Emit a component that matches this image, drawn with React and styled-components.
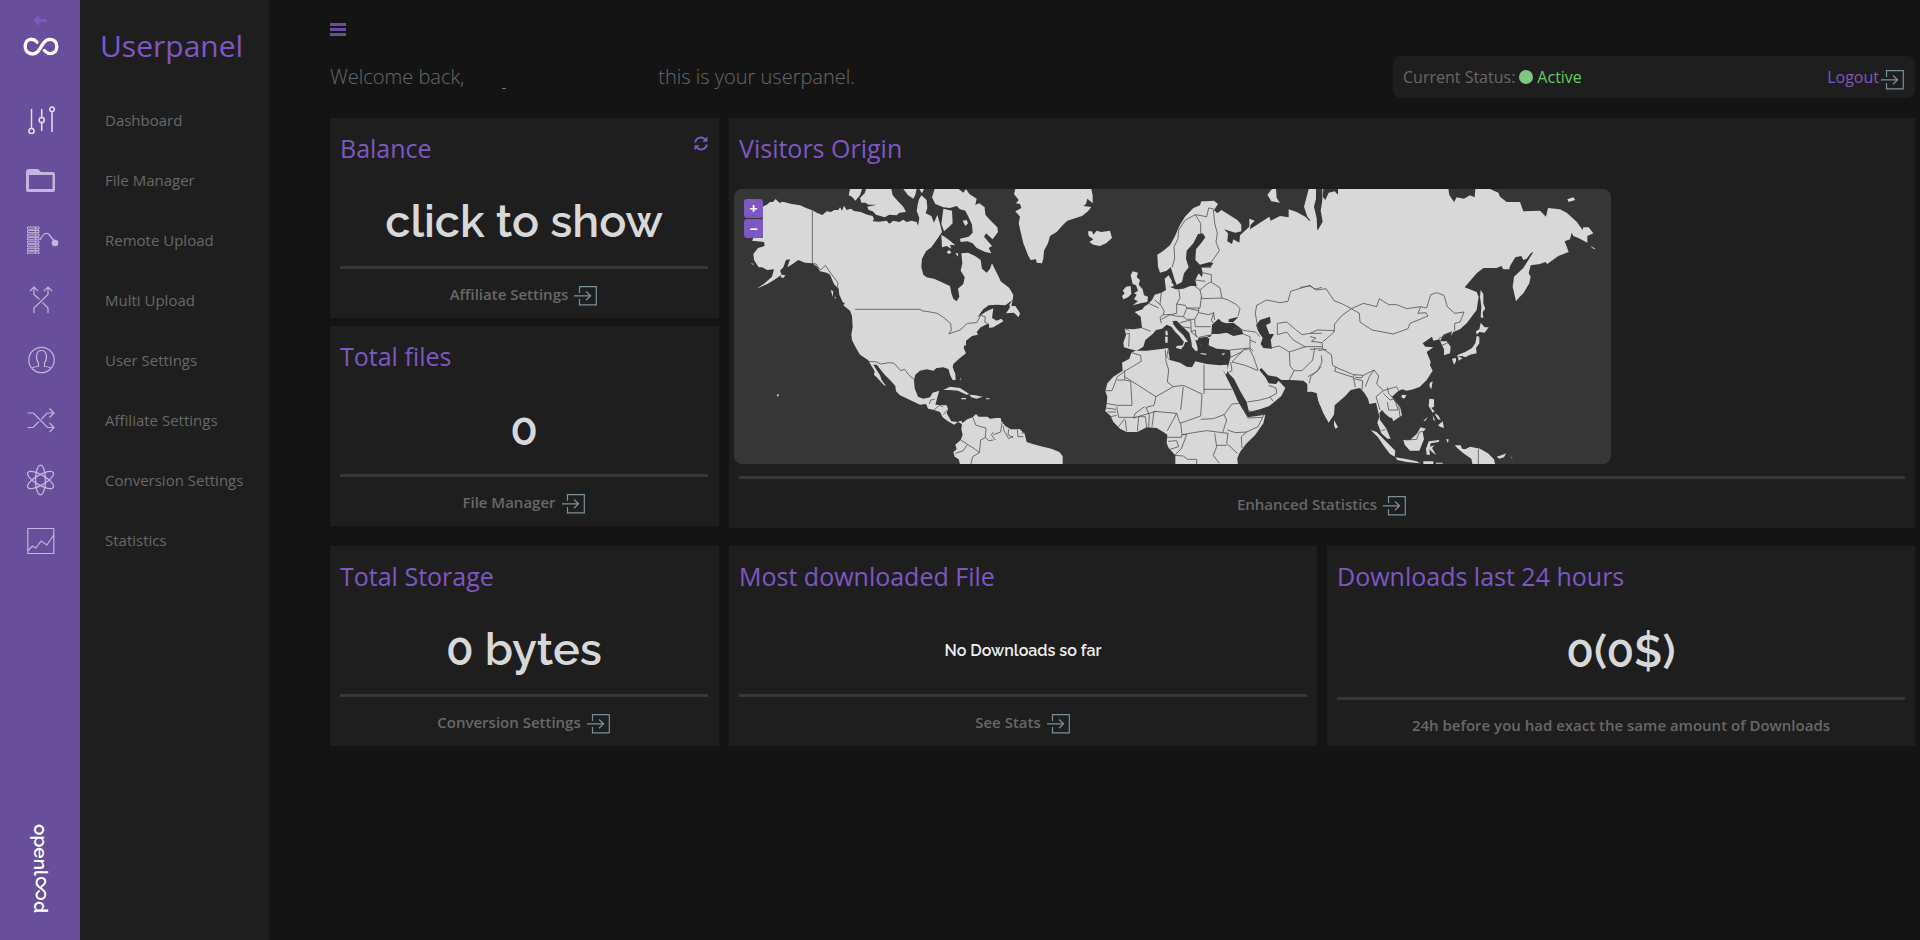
import React from "react";
import styled, { createGlobalStyle } from "styled-components";

const GlobalStyle = createGlobalStyle`
  * { box-sizing: border-box; }
  body { margin: 0; background: #141414; overflow: hidden; font-family: "Open Sans", sans-serif; }
`;

const Page = styled.div`
  display: flex;
  width: 1920px;
  height: 940px;
  background: #141414;
`;
const Rail = styled.nav`
  width: 80px;
  flex: none;
  display: flex;
  flex-direction: column;
  align-items: center;
  background: #684e9b;
`;
const RailTop = styled.div`
  height: 90px;
  width: 100%;
  display: flex;
  flex-direction: column;
  align-items: center;
  padding-top: 15px;
  svg { display: block; }
`;
const InfinityMark = styled.svg`
  margin: 11px 0 0 1px;
`;
const RailItem = styled.a`
  height: 60px;
  width: 80px;
  padding-left: ${(p) => p.$shift || 1}px;
  display: flex;
  align-items: center;
  justify-content: center;
  color: ${(p) => (p.$active ? "#e6e0f0" : "#c3b6dc")};
  svg { display: block; }
`;
const Brand = styled.div`
  margin: auto 0 30px 2px;
  height: 86px;
  width: 30px;
  display: flex;
  align-items: center;
  color: #fff;
  font: 600 19px/30px Raleway, sans-serif;
  writing-mode: vertical-rl;
  svg { display: block; flex: none; }
`;
const Side = styled.aside`
  width: 189px;
  flex: none;
  background: #1e1e1e;
`;
const SideTitle = styled.h1`
  margin: 0;
  height: 90px;
  padding: 25px 0 0 20px;
  font-size: 30px;
  line-height: 41px;
  font-weight: 400;
  color: #7e57c2;
`;
const SideLink = styled.a`
  display: block;
  height: 60px;
  padding-left: 25px;
  font-size: 15px;
  line-height: 60px;
  color: #686868;
  white-space: nowrap;
`;
const Main = styled.main`
  width: 1651px;
  padding: 0 5px 0 61px;
`;
const MenuBar = styled.div`
  height: 56px;
  padding-top: 23px;
`;
const Burger = styled.div`
  width: 16px;
  height: 13px;
  border-top: 3px solid #684e9b;
  border-bottom: 3px solid #684e9b;
  padding: 2px 0;
  &::before { content: ""; display: block; height: 3px; background: #684e9b; }
`;
const Header = styled.header`
  display: flex;
  height: 42px;
  margin-bottom: 20px;
  justify-content: space-between;
`;
const Welcome = styled.div`
  display: flex;
  align-items: center;
  width: 525px;
  padding-bottom: 2px;
  font-size: 20px;
  font-weight: 300;
  color: #686868;
  white-space: nowrap;
`;
const NameTail = styled.i`
  width: 4px;
  height: 1px;
  margin: 25px 0 0 38px;
  background: #777;
`;
const WelcomeEnd = styled.span`
  margin-left: auto;
`;
const Status = styled.div`
  width: 522px;
  border-radius: 8px;
  background: #1e1e1e;
  display: flex;
  align-items: center;
  padding: 0 11px 0 10px;
  font-size: 16px;
  color: #686868;
`;
const Dot = styled.i`
  width: 14px;
  height: 14px;
  margin: 0 4px 0 4px;
  border-radius: 50%;
  background: #7fc77f;
`;
const Active = styled.span`
  color: #66cc66;
`;
const Logout = styled.a`
  display: flex;
  align-items: center;
  margin-left: auto;
  color: #7e57c2;
  svg { display: block; margin: 5px 0 0 2px; }
`;
const Grid = styled.div`
  display: grid;
  grid-template-columns: 389px 588px 588px;
  column-gap: 10px;
  row-gap: 18px;
  align-items: start;
`;
const Stack = styled.div`
  display: flex;
  flex-direction: column;
  gap: 8px;
`;
const Card = styled.section`
  height: ${(p) => p.$height || 200}px;
  grid-column: span ${(p) => p.$span || 1};
  display: flex;
  flex-direction: column;
  background: #1e1e1e;
  padding: 0 ${(p) => p.$right || 10}px 0 10px;
`;
const CardHead = styled.div`
  height: ${(p) => p.$height || 62}px;
  display: flex;
  justify-content: space-between;
  flex: none;
  svg { display: block; margin-top: 18px; }
`;
const Title = styled.h2`
  margin: 0;
  padding-top: 12px;
  font-size: 25px;
  line-height: 36px;
  font-weight: 400;
  color: #7e57c2;
`;
const Value = styled.div`
  flex: 1;
  display: flex;
  align-items: center;
  justify-content: center;
  font-family: Raleway, Lato, sans-serif;
  font-weight: 600;
  font-size: ${(p) => (p.$small ? 16 : 45)}px;
  padding-bottom: ${(p) => (p.$small ? 2 : 3)}px;
  color: ${(p) => (p.$small ? "#eeeeee" : "#d8d8d8")};
  white-space: pre;
`;
const Rule = styled.div`
  height: 3px;
  flex: none;
  background: #363636;
`;
const CardFoot = styled.div`
  height: ${(p) => p.$height || 49}px;
  flex: none;
  padding-top: ${(p) => p.$drop || 0}px;
  display: flex;
  align-items: center;
  justify-content: center;
  font-size: 15px;
  font-weight: 600;
  color: #686868;
  svg { display: block; margin: 5px 1px 0 6px; }
`;
const MapFrame = styled.div`
  position: relative;
  width: 877px;
  height: 275px;
  margin: 0 0 12px -5px;
  border-radius: 8px;
  overflow: hidden;
  background: #363636;
  > svg { display: block; }
`;
const Zoom = styled.div`
  position: absolute;
  left: 10px;
  top: 10px;
  display: flex;
  flex-direction: column;
  gap: 1px;
`;
const ZoomButton = styled.button`
  width: 19px;
  height: 19px;
  padding: 0;
  border: 0;
  border-radius: 3px;
  background: #7e57c2;
  color: #fff;
  font: 700 14px/17px "Open Sans", sans-serif;
`;

const Exit = () => (
  <svg width="23" height="20" fill="none" stroke="#78909c" strokeWidth="1.2">
    <path d="M5.5 7V.7H22.3V18.8H5.5V13M0 9.8H16.5M12 5.5l4.6 4.3L12 14.2" />
  </svg>
);
const Line = ({ w = 28, h = 28, sw = 1.2, children }) => (
  <svg width={w} height={h} viewBox={`0 0 ${w} ${h}`} fill="none" stroke="currentColor" strokeWidth={sw}>
    {children}
  </svg>
);

const SlidersIcon = () => (
  <Line sw={1.5}>
    <path d="M4.500 3v19M14.700 3v8M14.700 17v8M25 6v20" />
    <circle cx="4.500" cy="25" r="2.6" /><circle cx="14.700" cy="14" r="2.6" /><circle cx="25" cy="3.3" r="2.3" />
  </Line>
);
const FolderIcon = () => (
  <svg width="29" height="24" fill="currentColor">
    <path fillRule="evenodd" d="M3 1H12L15 4H27Q29 4 29 6V22Q29 24 27 24H2Q0 24 0 22V4Q0 1 3 1ZM3 7V21H26.500V7Z" />
  </svg>
);
const RackIcon = () => (
  <svg width="32" height="28" fill="none" stroke="currentColor">
    {[0, 1, 2, 3, 4, 5, 6, 7].map((i) => (
      <path key={i} d={`M.5 ${1 + i * 3.55}H12V${3.1 + i * 3.55}H.5ZM8.500 ${1 + i * 3.55}v2`} strokeWidth="1" />
    ))}
    <path d="M13 14Q18 4 22.500 9L28 16" strokeWidth="1.3" />
    <circle cx="28" cy="17" r="3.300" fill="currentColor" stroke="none" />
  </svg>
);
const MergeIcon = () => (
  <Line w={24} h={28}>
    <path d="M5 27V22L19 8.500V1M19 27V22L13.500 16.500M10.500 13.500L5 8.500V1M.800 5.200L5 1L9.200 5.200M14.800 5.200L19 1L23.200 5.200" />
  </Line>
);
const UserIcon = () => (
  <Line>
    <circle cx="14.500" cy="14" r="12.700" />
    <path d="M5 22Q8 20.500 11.500 20.500V17C8.500 13 8.500 4.500 14.500 4.500S20.500 13 17.500 17V20.500Q21 20.500 24 22" />
  </Line>
);
const ShuffleIcon = () => (
  <Line>
    <path d="M.5 7H6.500L20.500 21.500H27M.5 21.500H6L12 15.500M14.500 13L20 7H27M22.500 2.500L27 7L22.500 11.500M22.500 17L27 21.500L22.500 26" />
  </Line>
);
const AtomIcon = () => (
  <Line w={28} h={32} sw={1.3}>
    <ellipse cx="13.500" cy="16" rx="5" ry="14.800" />
    <ellipse cx="13.500" cy="16" rx="5" ry="14.800" transform="rotate(60 13.500 16)" />
    <ellipse cx="13.500" cy="16" rx="5" ry="14.800" transform="rotate(120 13.500 16)" />
  </Line>
);
const ChartIcon = () => (
  <Line>
    <path d="M.8 2.500H26.800V27.500H.8ZM.8 25L5.300 20L8.800 22L14.300 15L19.800 19L26.800 9" />
  </Line>
);

const nav = [
  ["Dashboard", SlidersIcon],
  ["File Manager", FolderIcon],
  ["Remote Upload", RackIcon, 5],
  ["Multi Upload", MergeIcon],
  ["User Settings", UserIcon],
  ["Affiliate Settings", ShuffleIcon],
  ["Conversion Settings", AtomIcon],
  ["Statistics", ChartIcon],
];

const americas = [
  "M98 80L110 74 120 66 129 66 137 57 143 64 150 69 156 65 165 67 185 72 210 76 230 85 247 91 262 99 277 105 290 94 303 96 313 90 325 90 330 82 336 92 342 77 350 90 362 86 372 93 392 96 412 104 428 108 432 117 428 124 448 125 470 122 478 131 490 122 508 126 520 119 530 126 545 122 560 126 564 137 568 114 560 92 566 60 574 46 590 60 592 84 587 100 604 108 612 128 622 104 630 132 636 156 618 182 604 202 588 214 576 236 574 262 580 284 590 292 612 296 634 306 660 318 664 340 670 356 680 364 688 350 684 326 700 312 704 292 692 272 697 250 694 220 714 218 735 228 752 240 756 266 770 278 780 266 786 250 794 266 806 290 812 304 838 324 850 345 848 360 826 376 800 374 776 376 760 388 742 412 770 394 790 385 788 400 786 414 800 422 814 416 820 424 790 442 778 444 776 430 752 442 740 456 744 464 726 468 708 482 708 498 704 494 701 504 708 520 690 534 670 552 668 562 676 582 677 600 668 600 660 584 656 568 640 562 620 564 610 572 590 568 570 572 556 584 552 600 554 625 564 650 580 656 600 652 608 638 628 632 622 652 620 660 616 674 650 676 654 686 650 700 664 724 682 726 694 722 700 734 684 726 672 734 654 724 638 712 630 696 612 690 594 686 588 672 570 674 545 662 510 646 498 634 496 618 480 600 464 584 440 554 430 554 440 570 450 586 455 600 468 618 462 616 440 592 432 584 434 574 414 540 390 524 376 500 366 480 364 464 368 440 366 408 360 392 340 376 345 370 375 390 355 378 338 366 328 344 326 328 312 312 300 284 290 278 270 274 262 260 247 250 225 248 205 240 188 252 172 262 180 238 168 240 160 262 150 272 155 284 132 300 112 312 80 326 104 310 126 290 132 268 112 270 96 262 86 262 72 240 70 222 84 204 104 198 102 186 66 182 70 174 98 174Z",
  "M360 27H396L390 46 376 62 366 50 356 46Z M408 27H484L488 46 504 64 520 80 528 96 508 98 500 106 478 104 464 112 438 104 428 94 416 90 412 80 440 74 416 74 406 68 394 68 390 54 404 40Z M520 27H560L556 44 550 56 534 46Z M568 27H582L576 40Z M574 50L582 64 590 88 580 100 568 96 563 74Z",
  "M614 27H686L700 38 708 27 718 42 740 56 736 74 748 70 764 82 766 104 780 120 802 142 804 156 788 178 768 160 762 170 786 198 776 204 784 220 766 216 740 204 728 190 712 184 692 186 690 176 716 170 728 158 726 134 716 112 706 92 690 88 680 78 660 84 640 82 616 72 606 52Z M640 86L666 92 668 130 656 142 642 154 634 132Z M634 164L646 172 662 184 676 196 660 194 664 206 650 198 636 202Z M698 122L710 120 714 130 706 138Z M650 216L658 210 664 218 656 222Z M676 220L684 220 684 230Z",
  "M856 27H1084L1088 46 1088 70 1072 56 1068 72 1060 78 1084 81 1074 94 1056 108 1012 122 998 136 980 156 960 168 954 190 942 212 940 236 936 250 920 248 918 238 902 240 894 226 880 190 872 156 866 130 870 110 856 94 874 84 870 72 858 70 866 60 852 42Z",
  "M848 360L838 374 840 382 828 400 852 398 866 412 870 400 856 378 844 378Z M640 630L660 620 690 624 718 642 710 644 684 632 660 630Z M718 644L736 646 758 650 740 656 724 652Z M694 654h14v4h-14Z M768 655h11v3h-11Z M154 284l12 2-6 8-8-2Z M302 330l8 4-2 16Z M312 350l6 2 0 4Z M140 645l4-3 3 4-4 4Z M690 592l4 8-2 1Z M62 250l8 1 0 4Z",
  "M696 730L712 718 728 712 738 702 746 710 772 710 780 716 800 714 812 714 814 724 826 738 842 748 870 748 884 762 890 786 908 792 930 798 964 806 988 816 998 828V860H692L686 838 674 830 670 816 680 808 676 794 692 780 698 764 694 748Z",
];
const europe = [
  "M412 224L414 260 420 278 440 272 452 262 458 280 464 300 470 314 486 306 492 280 506 262 498 236 500 212 520 190 534 162 548 160 556 172 546 186 528 208 526 240 540 254 570 246 580 250 572 260 544 262 548 278 546 292 536 280 526 300 530 318 510 318 490 326 468 328 448 320 456 304 446 286 434 296 438 330 424 338 404 344 396 360 382 374 372 380 368 388 344 396 362 410 366 444 340 448 314 446 318 466 310 488 312 502 332 508 350 512 370 500 376 480 398 462 408 450 426 446 440 434 454 440 466 456 478 468 492 486 484 504 490 500 496 486 504 486 490 466 470 446 458 430 470 422 488 440 508 460 514 484 516 500 526 512 532 514 534 498 542 496 532 482 536 474 560 470 568 476 566 496 590 506 610 508 630 510 632 530 624 560 624 578 642 596 662 636 680 666 687 696 720 688 748 678 760 668 784 648 796 624 776 602 768 612 746 610 736 592 718 570 724 564 744 586 770 590 784 600 812 600 850 602 862 612 872 634 890 640 900 676 905 680V150H882L890 130 868 122 856 110 830 96 806 88 806 112 780 108 752 122 748 110 720 128 690 148 692 134 704 122 688 116 688 140 660 166 658 188 640 178 636 192 622 184 624 160 612 148 646 158 664 154 664 134 652 120 604 90 592 100 582 90 594 72 582 62 560 64 544 64 540 76 520 84 495 110 480 134 464 170 450 196 430 212Z",
  "M866 27H888V56L882 80 890 114 892 154H874L870 120 862 110 852 80Z M742 44L756 27H768L770 54 780 68 754 64Z M204 154L216 154 220 164 230 152 244 156 270 152 276 174 258 190 240 198 220 194 208 186 220 178 206 168Z",
  "M338 274L354 278 350 292 360 300 356 314 368 328 372 346 384 350 382 366 362 370 338 376 354 364 342 358 350 344 342 340 354 332 348 316 338 312 332 286Z M318 320L332 318 334 342 324 352 310 358 306 348 314 340 308 332Z M444 306L458 310 462 318 450 322Z M436 452h6l2 14h-7Z M435 470h8v18h-7Z M470 498L488 496 484 508 468 504Z M542 519l18 2-2 4-16-3Z M604 522l12-4-6 8Z",
  "M334 518L346 512 380 512 430 506 446 504 446 520 450 540 480 548 500 560 516 562 526 544 560 552 600 556 622 554 624 572 618 584 608 568 622 596 640 632 652 660 664 682 684 712 736 704 730 730 706 764 678 792 660 816 652 835 654 860H466V826L446 804 440 790 442 764 430 756 410 744 380 742 352 756 320 756 300 746 280 726 272 708 256 694 260 672 262 650 256 634 262 610 280 590 308 572 306 548 328 536Z",
];
const asia = [
  "M-8 636V124L12 152 22 153 38 125 32 92 37 60 37 27H415L418 45 432 66 440 52 462 56 480 46 494 52 496 27H540L565 38 570 50 590 66 630 66 640 94 690 92 708 110 714 84 750 88 770 98 800 125 818 150 820 142 836 142 850 160 832 168 832 188 810 176 790 168 785 158 780 178 764 184 776 216 745 228 712 252 706 246 690 252 662 256 656 280 662 290 658 310 640 340 628 352 618 364 608 320 612 290 640 264 670 216 662 220 650 236 640 240 634 228 616 232 600 258 598 268 580 268 574 258 560 264 520 264 500 280 464 322 500 336 506 350 500 390 470 430 450 448 430 456 422 468 426 454 400 464 390 484 410 484 422 500 420 520 402 526 402 508 396 496 388 478 370 482 366 470 338 490 346 500 370 502 350 516 362 545 360 556 368 572 350 600 330 620 310 628 290 632 276 628 264 634 246 650 254 664 270 680 276 706 250 724 246 714 238 712 224 700 216 690 208 700 210 720 228 744 242 776 232 776 214 760 202 728 208 710 198 668 178 672 174 656 164 640 150 624 122 630 106 648 74 676 72 704 56 728 40 700 24 660 20 634Z",
  "M512 330L520 342 520 370 526 386 518 396 520 414 512 412 514 380 510 350Z M512 428L524 442 536 442 524 458 508 456 500 464 498 454 508 448Z M500 468L508 470 508 490 498 504 500 520 480 524 466 532 456 528 440 530 444 524 466 516 486 504 496 490Z M426 536L438 534 438 544 432 554Z M444 530l14 4-12 8Z M360 608l8-4-4 24-6-10Z M276 644l14 2-8 10-8-4Z M72 720L84 742 76 746 72 736Z",
  "M182 750L200 756 220 776 244 800 256 812 254 830 240 822 220 796 204 772Z M256 832L284 836 320 844 330 850 290 846 262 840Z M280 780L300 780 320 762 332 742 348 746 338 756 342 778 328 812 300 812 284 794Z M358 656l14 2 0 22-8 4 10 10-6 4-12-20Z M384 736L398 724 402 744 390 740Z M376 700l10 8 6 12-8-2-8-12Z M368 706l8 16-6-2Z M356 784L388 780 386 786 362 790 360 800 374 796 366 804 378 824 370 820 358 808 360 824 350 824 348 806Z M408 778l8 0-2 12Z M434 796L452 796 456 806 466 808 480 800 510 806 534 820 552 838 556 856H488L484 836 460 820 444 806Z M560 830L578 824 588 820 582 832 568 836Z M574 812l14 8 M772 58L790 52 796 60 776 66Z M840 198l18 8-8 0Z M340 844h30v8h-30Z M378 848h20v3h-20Z M602 828l6 8-3-1Z M340 722l14-12-8 12Z",
];
const seas = [
  ["europe", "M574 462L576 434 596 416 606 426 620 430 640 428 664 446 670 462 640 468 620 458 596 462Z M626 418L656 410 640 426 626 426Z M708 436L720 420 750 410 752 428 738 436 748 462 762 462 752 480 756 506 730 504 722 492 728 474 716 456Z M456 424l12-2 40 38-8 2Z M526 480l8 26 8-8-6-16Z M560 468l14-4-4 8Z"],
  ["asia", "M40 27H84V44L74 34 56 38 46 60 38 50Z"],
];
const bordersA = "M247 91V250M247 250L258 252 272 270 286 256 304 282 324 308 322 320 326 328M375 388H572L574 392 600 396 622 400 640 412 662 430 664 450 656 462 690 450 712 430 740 428 752 406 766 410 764 426 772 430M414 544L440 546 452 552 478 548 492 550 512 572 524 568 536 584 554 600M598 672L602 660 614 658M612 690L628 676 640 680M640 704L652 690M728 712L738 736 768 744 766 772 776 782 790 780M790 764L812 756 816 728 M820 738L822 752 836 776 850 768 M836 748L834 764 850 774 M862 750L864 770 880 770M692 780L714 794 736 808 748 818 M676 820L700 812 712 794M748 818L752 780 768 772M790 756L784 764 796 780M748 818L728 830 722 856M890 756L874 760";
const bordersB = "M456 262L464 236 462 200 474 176 476 150 496 120 526 104 560 110 566 84 580 86M526 104L542 130 542 160M580 88L584 130 592 160 588 186 598 212 574 246M544 262L574 262M548 278L574 284 574 306 600 324 606 354 546 356 540 330 564 310 574 306M526 300L556 304M524 318L540 330M476 326L480 354 470 372 496 376 500 384 540 384 544 350M424 336L420 372 432 392 430 404 452 404 470 400 470 372M404 360L420 374 M386 370L416 384M366 444L392 454M430 404L420 412 424 430 M424 418L450 404 466 408M466 408L490 410 500 386M490 410L500 418 524 418 536 396 536 384M536 398L566 404 582 398 574 420 580 430M524 418L526 440 572 440M500 384L536 392M480 428L512 420 514 456 536 474 M484 440L512 444M512 456L526 450 528 470 M536 472L576 464M606 354L624 360 650 374 660 386 654 408M580 398L584 420M640 444L676 452 706 456 720 470M670 462L690 470 690 504 700 514M690 480L708 488M630 510L688 504M714 448L706 400 710 376 740 360 780 368 804 364 812 334 870 316 884 328 905 322M772 464V430L800 426 826 448 846 464 870 460 905 460M772 464L800 456 820 480 858 502 M752 504L778 498 808 516 856 500 905 500M808 516L810 558 822 572 808 600M822 572L846 572 878 540 884 504M905 560L872 590 868 610M626 532L636 530 668 514 M636 546L670 510 688 506 700 530 714 570M636 546L676 556 714 572M624 578L636 572 632 546M682 666L720 660 750 652 760 664M748 652L770 640 768 624 746 616M318 462L328 460 326 500M314 446L328 452M334 518L362 526 364 544 320 570 292 590 276 632H256M314 570V600L332 604 336 676H290L258 670M314 590L408 650 460 620 442 606 446 570 438 544 436 510M292 600H314M446 504L440 530 450 540M460 620L490 616 546 642 542 708 480 730 470 700 402 694 396 740M408 650L402 676 378 682 388 706M552 554V642M552 628H636M490 620L482 690M408 694L340 714 346 700 374 680M290 680L296 712 350 712M258 684L288 688 M262 696H288M272 710L290 706M296 740L314 716M320 754L316 720M352 754L356 710H376L380 742M388 706L386 742M542 718L580 716 612 704 620 720 608 758 560 752 520 758 486 764 482 730M612 704L636 672 660 670 M660 670L684 714 728 712 M684 692L732 704 714 740 680 756 646 758 622 750 M680 756L664 770 666 804M608 758L624 760 620 790 652 820M440 772H484L486 764 M444 784L470 782 476 800 450 808M486 764L500 764 484 806 464 826 M464 826L490 828 502 838H530V856M584 760L590 800 580 826 598 850M590 796L620 796M470 700L454 730 442 752";
const bordersC = "M-30 322L0 318 20 330 48 326 72 362 98 372 124 386 160 370 200 380 208 356 236 374 260 374 290 386 332 380 350 384 362 344 380 338 402 346 412 380 434 400 462 396 450 426 434 430V452M124 386L148 400 150 426 186 450 250 462 294 446 300 430 354 408 348 398 324 400 332 380M124 386L94 408 74 432 72 456 38 486M0 460L22 450 74 452M0 470L18 474 4 484 36 488 38 506 0 508M38 506L64 524 68 556 78 562 130 584 160 586 192 570 206 588 200 612 220 632 260 620 266 632M34 526L36 546 22 574-6 590M78 560L74 574 130 592 134 584M130 592L136 622M132 596L158 602 156 630M160 586L154 594 136 592M192 570L178 590 166 620M220 632L198 650 210 690M220 640L240 660 254 656 264 690 236 690 232 666M232 622L236 640 266 674 270 710M386 476L424 456M396 496L414 488M214 752L226 748M286 780L320 778 328 756 340 754M505 808V856M50 508L26 512";

const WorldMap = () => (
  <svg width="877" height="275" viewBox="12 27 2631 825" preserveAspectRatio="none">
    <g fill="#d8d8d8">
      <g>{americas.map((d) => <path key={d.slice(0, 12)} d={d} />)}</g>
      <g transform="translate(870)">{europe.map((d) => <path key={d.slice(0, 12)} d={d} />)}</g>
      <g transform="translate(1740)">{asia.map((d) => <path key={d.slice(0, 12)} d={d} />)}</g>
    </g>
    <g fill="#363636">
      {seas.map(([region, d]) => (
        <path key={region} d={d} transform={`translate(${region === "asia" ? 1740 : 870})`} />
      ))}
    </g>
    <g fill="none" stroke="#505050" strokeWidth="2.400" strokeLinejoin="round">
      <path d={bordersA} />
      <path d={bordersB} transform="translate(870)" />
      <path d={bordersC} transform="translate(1740)" />
    </g>
  </svg>
);

const StatCard = ({ title, value, small, right, action, icon, note }) => (
  <Card $right={right}>
    <CardHead>
      <Title>{title}</Title>
      {icon}
    </CardHead>
    <Value $small={small}>{value}</Value>
    <Rule />
    <CardFoot $height={note ? 46 : 49} $drop={note ? 4 : 0}>
      {action || note}
      {action && <Exit />}
    </CardFoot>
  </Card>
);

const Refresh = () => (
  <svg width="14" height="15" viewBox="0 0 14 15" fill="none" stroke="#7e57c2" strokeWidth="1.900">
    <path d="M1.200 6.500A5.700 5.700 0 0 1 11.500 4M12.800 8.500A5.700 5.700 0 0 1 2.500 11" />
    <path d="M13.500 .5V5.800H8.200ZM.5 14.500V9.200H5.800Z" fill="#7e57c2" stroke="none" />
  </svg>
);

export default function App() {
  return (
    <Page>
      <GlobalStyle />
      <Rail>
        <RailTop>
          <svg width="14" height="11" fill="#7e57c2"><path d="M0 5.500L6 0V4H14V7.300H6V11Z" /></svg>
          <InfinityMark width="36" height="20" viewBox="0 0 36 20" fill="none" stroke="#fff" strokeWidth="3.300" strokeLinecap="round">
            <path d="M14 5.200C8.500-.5 2.200 3 2.200 9.500C2.200 16.500 10.500 19.500 15.500 13.800L20.500 6C25.500-.5 33.800 2.500 33.800 9.500C33.800 16.500 26.500 19 21.500 13.500" />
          </InfinityMark>
        </RailTop>
        {nav.map(([label, Icon, shift], i) => (
          <RailItem key={label} $active={i === 0} $shift={shift}><Icon /></RailItem>
        ))}
        <Brand>
          openl
          <svg width="16" height="25" viewBox="0 0 16 25" fill="none" stroke="#fff" strokeWidth="2" strokeLinecap="round">
            <path d="M8.500 10.500C14 7 13 2 8.500 2C3 2 2 8 6 11L10 14C14 17 12.500 23 8 23C3 23 2 18 6 15" />
          </svg>
          d
        </Brand>
      </Rail>
      <Side>
        <SideTitle>Userpanel</SideTitle>
        {nav.map(([label]) => <SideLink key={label}>{label}</SideLink>)}
      </Side>
      <Main>
        <MenuBar><Burger /></MenuBar>
        <Header>
          <Welcome>
            Welcome back,
            <NameTail />
            <WelcomeEnd>this is your userpanel.</WelcomeEnd>
          </Welcome>
          <Status>
            Current Status:
            <Dot />
            <Active>Active</Active>
            <Logout>Logout<Exit /></Logout>
          </Status>
        </Header>
        <Grid>
          <Stack>
            <StatCard title="Balance" value="click to show" right={11} action="Affiliate Settings" icon={<Refresh />} />
            <StatCard title="Total files" value="0" right={11} action="File Manager" />
          </Stack>
          <Card $span={2} $height={410}>
            <CardHead $height={71}><Title>Visitors Origin</Title></CardHead>
            <MapFrame>
              <WorldMap />
              <Zoom>
                <ZoomButton>+</ZoomButton>
                <ZoomButton>−</ZoomButton>
              </Zoom>
            </MapFrame>
            <Rule />
            <CardFoot>Enhanced Statistics<Exit /></CardFoot>
          </Card>
          <StatCard title="Total Storage" value="0 bytes" right={11} action="Conversion Settings" />
          <StatCard title="Most downloaded File" value="No Downloads so far" small action="See Stats" />
          <StatCard title="Downloads last 24 hours" value="0(0$)" note="24h before you had exact the same amount of Downloads" />
        </Grid>
      </Main>
    </Page>
  );
}
